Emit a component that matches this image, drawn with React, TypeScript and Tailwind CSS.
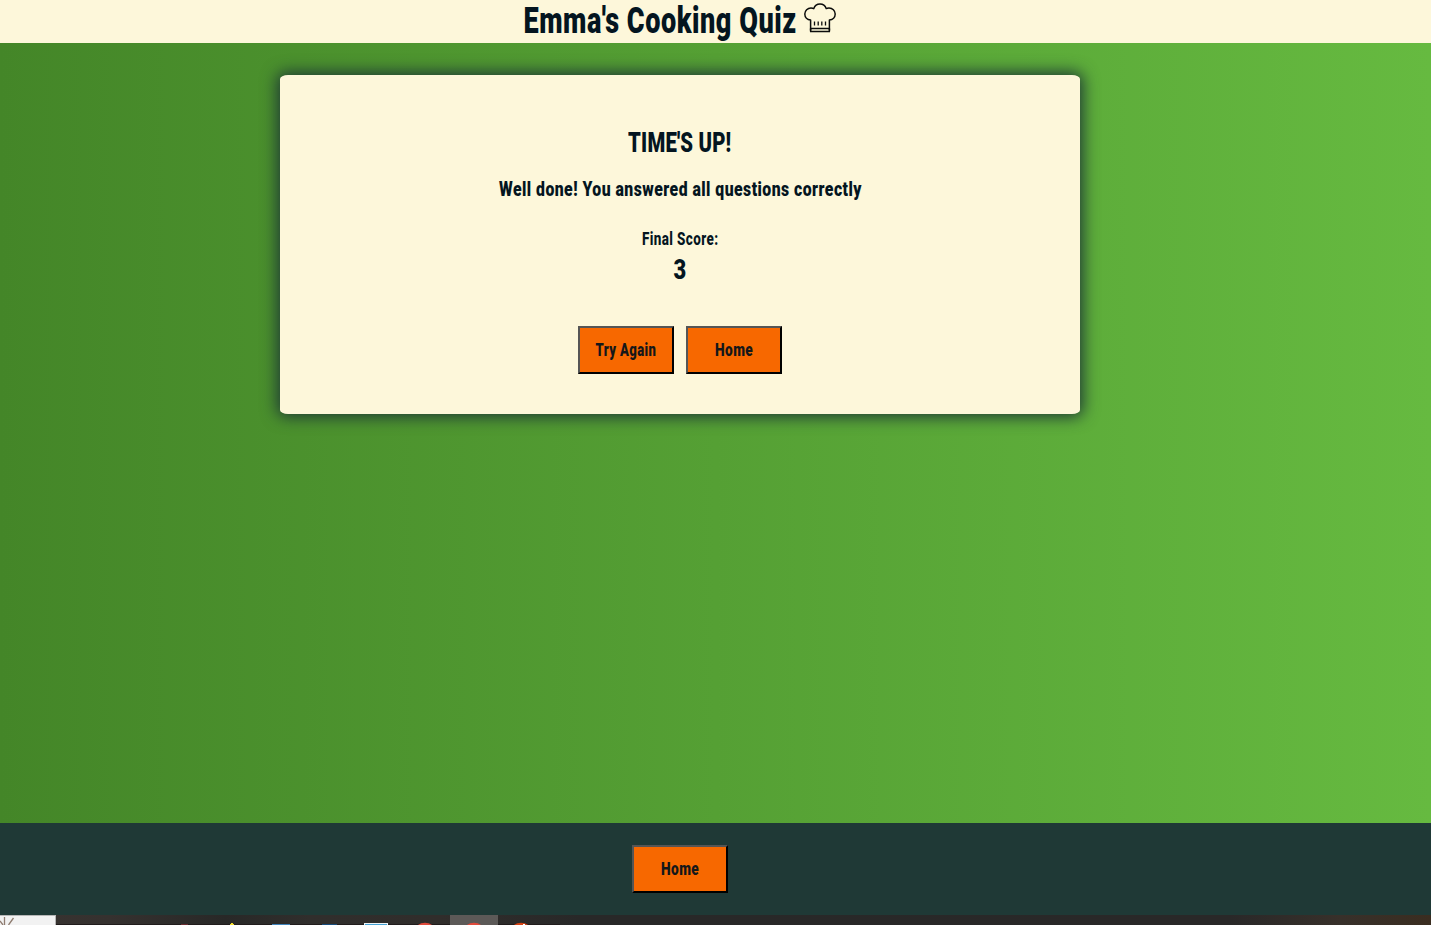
import { useLayoutEffect, useRef, useState } from "react";

type CondensedProps = { text: string; width: number; className: string };

/* Condenses a line of text horizontally so that it fills the given width. */
function Condensed({ text, width, className }: CondensedProps) {
  const ref = useRef<HTMLSpanElement>(null);
  const [scale, setScale] = useState(1);
  useLayoutEffect(() => {
    if (ref.current) setScale(width / ref.current.offsetWidth);
  }, [text, width]);
  return (
    <span className="flex justify-center" style={{ width }}>
      <span
        ref={ref}
        className={`block shrink-0 whitespace-nowrap ${className}`}
        style={{ transform: `scaleX(${scale})` }}
      >
        {text}
      </span>
    </span>
  );
}

function QuizButton({ label, width }: { label: string; width: number }) {
  return (
    <button className="flex h-12 w-24 items-center justify-center border-2 border-t-[#555] border-r-black border-b-black border-l-[#555] bg-[#f76800]">
      <Condensed text={label} width={width} className="text-[18px] leading-6 font-black tracking-[0.03em] text-[#151719]" />
    </button>
  );
}

function ChefHat() {
  return (
    <svg className="h-8 w-8 shrink-0" viewBox="0 0 32 32" fill="none" stroke="#0b0c0b" strokeWidth="1.5" strokeLinejoin="round">
      <path d="M6.600 28.500V18.100C3.300 17.800.8 15.200.8 12c0-3.400 2.800-6.100 6.200-6.100 1 0 2 .2 2.800.7C10.800 3.600 13.200 2 16 2s5.200 1.600 6.200 4.600c.8-.5 1.800-.7 2.800-.7 3.400 0 6.200 2.700 6.200 6.100 0 3.200-2.500 5.800-5.800 6.100v10.400" />
      <path d="M6.600 26.500h18.800M6 29.500h20M6.600 26.500v3M25.400 26.500v3" />
      <path d="M10.500 19.500v4M14.200 19.500v4M17.800 19.500v4M21.500 19.500v4" strokeWidth="1.300" />
    </svg>
  );
}

function Taskbar() {
  return (
    <div className="flex h-[10px] overflow-hidden bg-[linear-gradient(to_right,#383330_0,#35312f_110px,#282827_225px,#302e2c_310px,#302d2b_440px,#282828_580px,#292828_1230px,#37302a_1340px,#3a2d20_1431px)]">
      <svg className="h-[10px] w-[560px]" viewBox="0 0 560 10">
        <path d="M0 0h56v10H0z" fill="#b7b7b7" />
        <path d="M0 1h55v9H0z" fill="#f2f2f2" />
        <path d="M4.500 2v8M13.500 3 8.500 10M0 6l3 4" stroke="#8f7c70" strokeWidth="1.300" />
        <path d="M56 9h504v1H56z" fill="#211c1c" />
        <path d="M450 0h48v10h-48z" fill="#5c5957" />
        <path d="M181 9.200h7v.8h-7z" fill="#7c3035" />
        <path d="M231 8h2v1h1v1h-4V9h1z" fill="#f6df2e" />
        <path d="M272 9h18v1h-18z" fill="#3f83bb" />
        <path d="M322 9h15v1h-15z" fill="#164b7c" />
        <path d="M364 8h24v2h-24z" fill="#edf4f7" />
        <path d="M365 9h22v1h-22z" fill="#45a2d5" />
        <circle cx="425" cy="19.700" r="12" fill="#e14a3b" />
        <circle cx="474" cy="19.700" r="12" fill="#e14a3b" />
        <circle cx="521" cy="19.700" r="12" fill="#d54213" />
        <path d="M523 9h2v1h-2z" fill="#fff" />
      </svg>
    </div>
  );
}

export default function App() {
  return (
    <div className="flex h-[925px] w-[1431px] flex-col overflow-hidden font-['Roboto','Liberation_Sans',sans-serif] text-[#04151f]">
      <header className="h-[43px] shrink-0 bg-[#fdf7da]">
        <div className="flex h-[42px] w-[1360px] items-center justify-center gap-[7px]">
          <h1>
            <Condensed text="Emma's Cooking Quiz" width={273} className="text-[36.3px] leading-[42px] font-black tracking-[0.02em]" />
          </h1>
          <div className="h-[38px]">
            <ChefHat />
          </div>
        </div>
      </header>
      <main className="h-[780px] shrink-0 bg-linear-to-r/srgb from-[#448628] to-[#66ba40] pt-8">
        <div className="flex w-[1360px] justify-center">
          <section className="flex h-[339px] w-[800px] flex-col items-center rounded-[8px/4px] bg-[#fdf7da] pt-[51px] shadow-[0_0_16px_3px_#1e3935]">
            <h2>
              <Condensed text="TIME'S UP!" width={103} className="text-[27px] leading-[34px] font-black tracking-[0.01em]" />
            </h2>
            <h3 className="mt-[13px]">
              <Condensed text="Well done! You answered all questions correctly" width={363} className="text-[21px] leading-8 font-black tracking-[0.03em]" />
            </h3>
            <p className="mt-[22px]">
              <Condensed text="Final Score:" width={77} className="text-[18px] leading-6 font-extrabold tracking-[0.03em]" />
            </p>
            <p className="mt-[3px]">
              <Condensed text="3" width={13} className="text-[27px] leading-8 font-black" />
            </p>
            <div className="mt-10 flex gap-3">
              <QuizButton label="Try Again" width={61} />
              <QuizButton label="Home" width={38} />
            </div>
          </section>
        </div>
      </main>
      <footer className="h-[92px] shrink-0 bg-[#1f3936] pt-[22px]">
        <div className="flex w-[1360px] justify-center">
          <QuizButton label="Home" width={38} />
        </div>
      </footer>
      <Taskbar />
    </div>
  );
}
